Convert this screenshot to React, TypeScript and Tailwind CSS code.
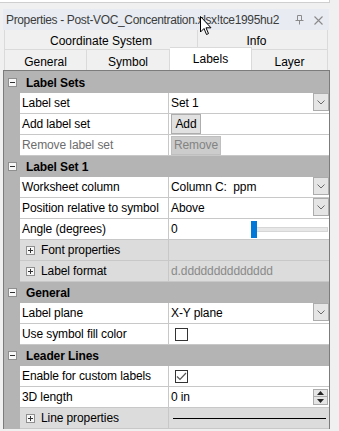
const font = { fontFamily: '"Liberation Sans", Arial, sans-serif' };

function Gutter() {
  return <div className="w-[16px] shrink-0 bg-[#b4b4b4]" />;
}

function Box({ plus }: { plus?: boolean }) {
  return (
    <div className="relative h-[9px] w-[9px] shrink-0 border border-[#8f8f8f] bg-[#f7f7f7]">
      <div className="absolute left-[1px] top-[3px] h-[1px] w-[5px] bg-[#333]" />
      {plus && <div className="absolute left-[3px] top-[1px] h-[5px] w-[1px] bg-[#333]" />}
    </div>
  );
}

function Category({ label }: { label: string }) {
  return (
    <div className="flex h-[21px] items-center bg-[#b4b4b4] pl-[4px]">
      <Box />
      <span className="ml-[9px] whitespace-nowrap text-[12px] font-bold tracking-[-0.1px] text-black">
        {label}
      </span>
    </div>
  );
}

function Row({
  name,
  children,
  disabled,
}: {
  name: string;
  children?: React.ReactNode;
  disabled?: boolean;
}) {
  return (
    <div className="flex h-[21px]">
      <Gutter />
      <div className="flex flex-1 border-b border-[#c8c8c8] bg-white">
        <div
          className={`flex w-[149px] items-center whitespace-nowrap border-r border-[#c8c8c8] pl-[2px] text-[12px] tracking-[-0.1px] ${
            disabled ? "text-[#6d6d6d]" : "text-black"
          }`}
        >
          {name}
        </div>
        <div className="flex flex-1 items-center whitespace-nowrap pl-[2px] text-[12px] tracking-[-0.1px] text-black">
          {children}
        </div>
      </div>
    </div>
  );
}

function SubRow({ name, children }: { name: string; children?: React.ReactNode }) {
  return (
    <div className="flex h-[21px]">
      <Gutter />
      <div className="flex flex-1 border-b border-[#c8c8c8] bg-[#dcdcdc]">
        <div className="flex w-[149px] items-center whitespace-nowrap border-r border-[#c8c8c8] pl-[6px] text-[12px] tracking-[-0.1px] text-black">
          <Box plus />
          <span className="ml-[6px]">{name}</span>
        </div>
        <div className="flex flex-1 items-center whitespace-nowrap pl-[2px] text-[12px] tracking-[-0.1px]">
          {children}
        </div>
      </div>
    </div>
  );
}

function DropButton() {
  return (
    <div className="ml-auto flex h-[18px] w-[16px] items-center justify-center self-start border border-[#acacac] bg-[#e5e5e5]">
      <svg width="8" height="5" viewBox="0 0 8 5">
        <path d="M0.5 0.5 L4 4 L7.5 0.5" fill="none" stroke="#6a6a6a" strokeWidth="1" />
      </svg>
    </div>
  );
}

function Check({ checked }: { checked?: boolean }) {
  return (
    <div className="ml-[4px] flex h-[13px] w-[13px] items-center justify-center border border-[#333] bg-white">
      {checked && (
        <svg width="11" height="9" viewBox="0 0 11 9">
          <path d="M1 4.5 L4 7.5 L10 1" fill="none" stroke="#555" strokeWidth="1.2" />
        </svg>
      )}
    </div>
  );
}

export default function App() {
  return (
    <div className="relative h-[431px] w-[339px] overflow-hidden bg-[#f0f0f0]" style={font}>
      <div className="h-[3px] w-[330px] border-b border-r border-[#cfcfcf] bg-white" />
      <div className="h-[6px]" />

      <div className="ml-[3px] flex h-[21px] w-[326px] items-center bg-[#e8ecf2] pl-[3px] pr-[6px] pt-[1px]">
        <span className="whitespace-nowrap text-[12px] tracking-[-0.35px] text-[#3c3c3c]">
          Properties - Post-VOC_Concentration.xlsx!tce1995hu2
        </span>
        <div className="ml-auto flex items-center gap-[10px]">
          <svg width="9" height="10" viewBox="0 0 9 10">
            <path d="M2.5 0.5 H6.5 V5.5 H2.5 Z M0.5 5.5 H8.5 M4.5 5.5 V9.5" fill="none" stroke="#8a8a8a" />
          </svg>
          <svg width="9" height="9" viewBox="0 0 9 9">
            <path d="M0.5 0.5 L8.5 8.5 M8.5 0.5 L0.5 8.5" stroke="#8a8a8a" strokeWidth="1.1" />
          </svg>
        </div>
      </div>

      <div className="ml-[4px] w-[324px] whitespace-nowrap text-[12px] text-black">
        <div className="flex h-[20px] border-b border-[#dadada]">
          <div className="flex w-[194px] items-center justify-center border-l border-r border-[#dadada] pt-[3px]">
            Coordinate System
          </div>
          <div className="flex flex-1 items-center justify-center border-r border-[#dadada] pr-[12px] pt-[3px]">
            Info
          </div>
        </div>
        <div className="flex h-[20px]">
          <div className="flex w-[83px] items-center justify-center border-l border-r border-[#dadada] pt-[3px]">
            General
          </div>
          <div className="flex w-[83px] items-center justify-center border-r border-[#dadada] pt-[3px]">
            Symbol
          </div>
          <div className="relative z-10 -mt-[3px] flex h-[23px] w-[82px] items-center justify-center border-r border-t border-[#dadada] bg-white pb-[1px]">
            Labels
          </div>
          <div className="flex flex-1 items-center justify-center border-r border-[#dadada] pt-[3px]">
            Layer
          </div>
        </div>
      </div>

      <div className="ml-[3px] w-[327px] border-l border-r border-t border-[#7c7c7c] bg-[#b4b4b4] pt-[1px]">
        <Category label="Label Sets" />
        <Row name="Label set">
          <span>Set 1</span>
          <DropButton />
        </Row>
        <Row name="Add label set">
          <div className="flex h-[20px] w-[30px] items-center justify-center border border-[#adadad] bg-[#e1e1e1]">
            Add
          </div>
        </Row>
        <Row name="Remove label set" disabled>
          <div className="flex h-[19px] w-[50px] items-center justify-center border border-[#bfbfbf] bg-[#cccccc] text-[#838383]">
            Remove
          </div>
        </Row>

        <Category label="Label Set 1" />
        <Row name="Worksheet column">
          <span className="whitespace-pre">Column C:  ppm</span>
          <DropButton />
        </Row>
        <Row name="Position relative to symbol">
          <span>Above</span>
          <DropButton />
        </Row>
        <Row name="Angle (degrees)">
          <span>0</span>
          <div className="relative ml-[73px] flex h-[17px] flex-1 items-center pr-[1px]">
            <div className="h-[5px] w-full border border-[#d6d6d6] bg-[#e7e7e7]" />
            <div className="absolute left-0 top-0 h-[17px] w-[6px] bg-[#0078d7]" />
          </div>
        </Row>
        <SubRow name="Font properties" />
        <SubRow name="Label format">
          <span className="text-[#8a8a8a]">d.dddddddddddddd</span>
        </SubRow>

        <Category label="General" />
        <Row name="Label plane">
          <span>X-Y plane</span>
          <DropButton />
        </Row>
        <Row name="Use symbol fill color">
          <Check />
        </Row>

        <Category label="Leader Lines" />
        <Row name="Enable for custom labels">
          <Check checked />
        </Row>
        <Row name="3D length">
          <span>0 in</span>
          <div className="ml-auto mr-[1px] flex h-[16px] w-[15px] flex-col self-center">
            <div className="flex h-[8px] items-center justify-center border border-[#acacac] bg-[#e5e5e5]">
              <svg width="7" height="4" viewBox="0 0 7 4">
                <path d="M0 4 L3.5 0 L7 4 Z" fill="#222" />
              </svg>
            </div>
            <div className="flex h-[8px] items-center justify-center border border-t-0 border-[#acacac] bg-[#e5e5e5]">
              <svg width="7" height="4" viewBox="0 0 7 4">
                <path d="M0 0 L3.5 4 L7 0 Z" fill="#222" />
              </svg>
            </div>
          </div>
        </Row>
        <SubRow name="Line properties">
          <div className="ml-[2px] mr-[3px] h-[1px] flex-1 bg-black" />
        </SubRow>
      </div>

      <svg
        className="absolute left-[200px] top-[16px]"
        width="13"
        height="20"
        viewBox="0 0 13 20"
      >
        <path
          d="M0.5 0.5 L0.5 16 L4 12.5 L6.5 18.5 L8.5 17.6 L6 11.8 L11 11.8 Z"
          fill="white"
          stroke="black"
          strokeWidth="1"
        />
      </svg>
    </div>
  );
}
